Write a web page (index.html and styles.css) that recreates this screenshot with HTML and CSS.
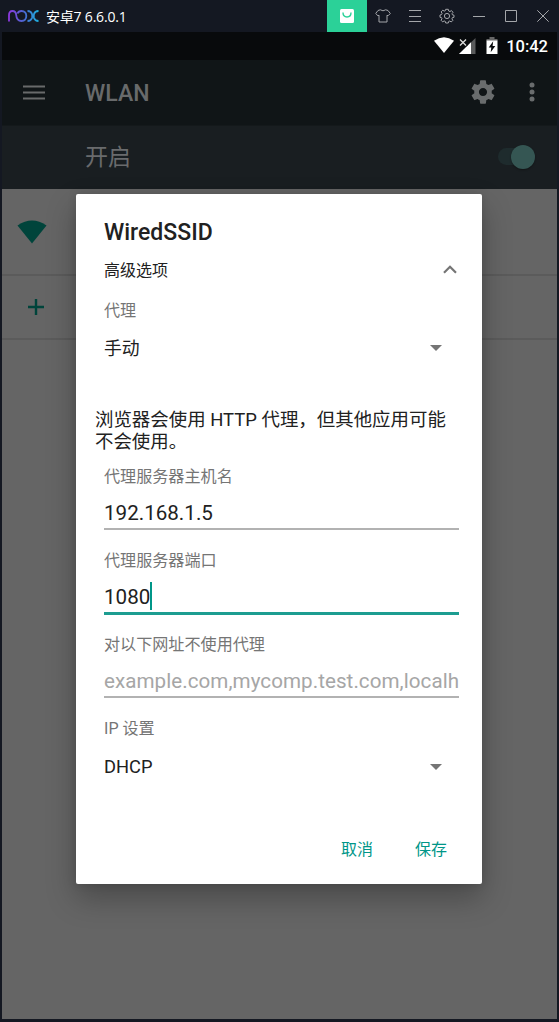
FILE: index.html
```html
<!DOCTYPE html>
<html lang="zh-CN">
<head>
<meta charset="utf-8">
<title>WLAN</title>
<link rel="stylesheet" href="styles.css">
</head>
<body>
<div class="window">
  <header class="titlebar">
    <svg class="logo" width="32" height="14" viewBox="0 0 32 14">
      <defs><linearGradient id="nox" x1="0" y1="0" x2="32" y2="0" gradientUnits="userSpaceOnUse"><stop offset="0" stop-color="#9036e0"/><stop offset=".5" stop-color="#4a68d0"/><stop offset="1" stop-color="#18b8e0"/></linearGradient></defs>
      <g fill="none" stroke="url(#nox)" stroke-width="1.8">
        <path d="M1 12.500V6Q1 2 4.500 2Q7.800 2 8.200 6Q8.600 12 13.500 12Q18.300 11.800 18.300 7Q18.300 2 13.500 2Q10.500 2 9.500 4.500"/>
        <path d="M19.500 2Q23 2 24 5Q24.500 7 24 9Q23 12 19.500 12M30.500 2Q27 2 26 5Q25.500 7 26 9Q27 12 30.500 12"/>
      </g>
    </svg>
    <span class="app-name">安卓7 6.6.0.1</span>
    <div class="tools">
      <div class="tool store"><svg width="14" height="14" viewBox="0 0 14 14"><rect width="14" height="14" rx="1.500" fill="#fff"/><path d="M3 3.500Q3 8 7 8Q11 8 11 3.500" fill="none" stroke="#2bd198" stroke-width="1.400"/></svg></div>
      <div class="tool"><svg width="16" height="14" viewBox="0 0 16 14"><path d="M5.300 .8Q8 2.800 10.700 .8L13 1.500L15.300 4.500L13 6.800L12 6.200V13H4V6.200L3 6.800L.7 4.500L3 1.500Z"/></svg></div>
      <div class="tool"><svg width="12" height="12" viewBox="0 0 12 12"><path d="M0 .5H12M0 6.500H12M0 11.500H12"/></svg></div>
      <div class="tool"><svg width="16" height="16" viewBox="-8 -8 16 16"><path d="M-1.300-6.700H1.300L1.700-5L3-4.400L4.400-5.500L6-3.700L5-2.300L5.400-1.200L7-.8V1.300L5.400 1.600L4.900 2.900L5.900 4.300L4.200 6L2.800 5L1.700 5.400L1.300 7H-1.300L-1.700 5.400L-2.900 4.900L-4.300 5.900L-6 4.200L-5 2.800L-5.400 1.700L-7 1.300V-1L-5.400-1.500L-4.900-2.700L-5.900-4.100L-4.200-5.800L-2.800-4.900L-1.700-5.300Z"/><circle r="2.600"/></svg></div>
      <div class="tool"><svg width="12" height="12" viewBox="0 0 12 12"><path d="M0 6.500H12"/></svg></div>
      <div class="tool"><svg width="12" height="12" viewBox="0 0 12 12"><path d="M.5 .5H11.500V11.500H.5Z"/></svg></div>
      <div class="tool"><svg width="12" height="12" viewBox="0 0 12 12"><path d="M.3 .3L11.700 11.700M11.700 .3L.3 11.700"/></svg></div>
    </div>
  </header>
  <main class="screen">
    <div class="status">
      <svg class="s-wifi" width="20" height="16" viewBox="0 0 20 16"><path d="M0 3.800Q10-3.400 20 3.800L10 16Z" fill="#fff"/></svg>
      <svg class="s-signal" width="17" height="16" viewBox="0 0 17 16"><path d="M0 16L16.500 0V16Z" fill="#5a5b5c"/><path d="M0 16L12 4.300V16Z" fill="#fff"/><path d="M-1-1H8L8.500 7.500L6 9H-1Z" fill="#080a0c"/><path d="M1 1.500L7 7.500M7 1.500L1 7.500" stroke="#ddd" stroke-width="1.300"/></svg>
      <svg class="s-battery" width="12" height="17" viewBox="0 0 12 17"><path d="M3.500 0H8.500V2H11.500V4H.5V2H3.500Z" fill="#666"/><path d="M.5 3.500H11.500V17H.5Z" fill="#fff"/><path d="M7.200 4.300L2.700 10.600H5.300L4.700 15.200L9.300 9H6.600Z" fill="#080a0c"/></svg>
      <span class="clock">10:42</span>
    </div>
    <div class="toolbar">
      <svg class="menu" width="22" height="15" viewBox="0 0 22 15"><path d="M0 1.500H22M0 7.500H22M0 13.500H22" stroke="#686a6b" stroke-width="2"/></svg>
      <h1 class="page-title">WLAN</h1>
      <svg class="gear" width="28" height="28" viewBox="0 0 24 24"><path fill="#696c6d" d="M19.430 12.980c.04-.32.07-.64.07-.98s-.03-.66-.07-.98l2.110-1.650c.19-.15.24-.42.12-.64l-2-3.460c-.12-.22-.39-.3-.61-.22l-2.490 1c-.52-.4-1.080-.73-1.690-.98l-.38-2.650C14.460 2.180 14.250 2 14 2h-4c-.25 0-.46.18-.49.42l-.38 2.650c-.61.25-1.170.59-1.690.98l-2.490-1c-.23-.09-.49 0-.61.22l-2 3.460c-.13.22-.07.49.12.64l2.110 1.650c-.04.32-.07.65-.07.98s.03.66.07.98l-2.110 1.650c-.19.15-.24.42-.12.64l2 3.460c.12.22.39.3.61.22l2.490-1c.52.4 1.080.73 1.690.98l.38 2.650c.03.24.24.42.49.42h4c.25 0 .46-.18.49-.42l.38-2.650c.61-.25 1.170-.59 1.690-.98l2.490 1c.23.09.49 0 .61-.22l2-3.460c.12-.22.07-.49-.12-.64l-2.110-1.650zM12 15.500c-1.930 0-3.500-1.570-3.500-3.500s1.570-3.500 3.500-3.500 3.500 1.570 3.500 3.500-1.570 3.500-3.500 3.500z"/></svg>
      <svg class="more" width="6" height="20" viewBox="0 0 6 20"><g fill="#696c6d"><circle cx="3" cy="3" r="2.500"/><circle cx="3" cy="10" r="2.500"/><circle cx="3" cy="17" r="2.500"/></g></svg>
    </div>
    <div class="switch-bar"><span>开启</span><div class="switch"><i class="thumb"></i></div></div>
    <div class="row network"><svg width="30" height="24" viewBox="0 0 30 24"><path d="M.5 5.500Q15-4.500 29.500 5.500L15 23.500Z" fill="#00443b"/></svg></div>
    <div class="row add"><svg width="18" height="18" viewBox="0 0 18 18"><path d="M1 9H17M9 1V17" stroke="#00443b" stroke-width="2.400"/></svg></div>
  </main>
  <section class="dialog">
    <h2 class="ssid">WiredSSID</h2>
    <div class="advanced"><span>高级选项</span><svg width="14" height="9" viewBox="0 0 14 9"><path d="M1 7.700L7 1.700L13 7.700" fill="none" stroke="#757575" stroke-width="2.200"/></svg></div>
    <div class="label proxy-label">代理</div>
    <div class="select"><span>手动</span><i class="arrow"></i></div>
    <p class="warning">浏览器会使用 HTTP 代理，但其他应用可能不会使用。</p>
    <div class="field"><div class="label">代理服务器主机名</div><div class="input">192.168.1.5</div></div>
    <div class="field"><div class="label">代理服务器端口</div><div class="input focused">1080<i class="caret"></i></div></div>
    <div class="field"><div class="label">对以下网址不使用代理</div><div class="input placeholder">example.com,mycomp.test.com,localh</div></div>
    <div class="label ip-label">IP 设置</div>
    <div class="select ip"><span>DHCP</span><i class="arrow"></i></div>
    <div class="actions"><span>取消</span><span>保存</span></div>
  </section>
</div>
</body>
</html>
```

FILE: styles.css
```css
* { box-sizing: border-box; }
body { margin: 0; font-family: Roboto, "Noto Sans CJK SC", sans-serif; }
svg { display: block; flex: none; }
i { display: block; }
.window { position: relative; width: 559px; height: 1022px; padding: 0 2px 3px; background: #141822; overflow: hidden; }
.titlebar { display: flex; align-items: center; height: 32px; padding-left: 6px; }
.app-name { margin-left: 6px; padding-top: 2px; color: #fff; font: 14px/20px "Open Sans", "Noto Sans CJK SC", sans-serif; letter-spacing: -.2px; white-space: nowrap; }
.tools { display: flex; margin-left: auto; margin-right: -2px; }
.tool { display: flex; align-items: center; justify-content: center; width: 32px; height: 32px; fill: none; stroke: #a4a6aa; stroke-width: 1; }
.store { width: 40px; background: #2bd198; stroke: none; }
.screen { height: 987px; background: #656565; }
.status { display: flex; align-items: center; height: 28px; padding-right: 9px; justify-content: flex-end; background: #080a0c; }
.s-wifi { margin: -2px 1px 0 0; }
.s-signal { margin: -1px 1px 0 4px; }
.s-battery { margin: -2px 0 0 9px; }
.clock { margin-left: 8px; color: #fff; font-size: 16.500px; font-weight: 500; line-height: 31px; }
.toolbar { display: flex; align-items: center; height: 66px; padding: 0 22px 1px 21px; background: #101517; border-bottom: 1px solid #14191b; }
.page-title { margin: 3px 0 0 40px; color: #686a6b; font-size: 23px; font-weight: 500; line-height: 30px; }
.gear { margin-left: auto; }
.more { margin-left: 32px; margin-right: 0; }
.switch-bar { display: flex; align-items: center; justify-content: space-between; height: 63px; padding: 0 22px 0 83px; background: #191e21; color: #696b6d; font-size: 23px; line-height: 60px; }
.switch-bar span { padding-top: 1px; }
.switch { display: flex; align-items: center; justify-content: flex-end; width: 37px; height: 17px; margin-top: -2px; border-radius: 9px; background: #1e2b2d; }
.thumb { width: 24px; height: 24px; border-radius: 50%; background: #355653; box-shadow: 0 1px 2px #0005; flex: none; }
.row { display: flex; align-items: center; border-bottom: 2px solid #5b5b5b; }
.network { height: 87px; padding-left: 15px; }
.add { height: 64px; padding: 0 0 1px 25px; }
.dialog { position: absolute; left: 76px; top: 194px; width: 406px; height: 690px; padding: 19px 23px 0 28px; background: #fff; border-radius: 2px; color: #212121; box-shadow: 0 14px 30px rgba(0,0,0,.28), 0 0 10px rgba(0,0,0,.12); }
.ssid { height: 37px; margin: 0; font-size: 23px; font-weight: 500; line-height: 39px; }
.advanced { display: flex; align-items: center; justify-content: space-between; height: 39px; padding-right: 2px; font-size: 16px; }
.advanced span { margin-top: -2px; }
.label { color: #757575; font-size: 16.100px; line-height: 23px; height: 22px; }
.proxy-label { height: 40px; line-height: 43px; }
.select { display: flex; align-items: center; justify-content: space-between; height: 36px; padding-right: 17px; font-size: 17.800px; }
.arrow { width: 0; height: 0; border: solid transparent; border-width: 6px 6px 0; border-top-color: #757575; }
.select .arrow { margin-top: 2px; }
.warning { width: 358px; margin: 45px 0 0 -9px; font-size: 18.450px; line-height: 21.500px; }
.field { height: 84px; }
.warning + .field { margin-top: 12px; }
.input { display: flex; align-items: flex-end; height: 43px; padding-bottom: 1px; border-bottom: 2px solid #b2b2b2; font-size: 20.600px; line-height: 28px; white-space: nowrap; overflow: hidden; }
.focused { height: 44px; border-bottom: 3px solid #1d9d91; }
.caret { width: 2px; height: 28px; margin-bottom: 1px; background: #009688; }
.placeholder { color: #a6a6a6; letter-spacing: .05px; }
.ip { height: 36px; margin-top: 9px; font-size: 18.300px; }
.actions { display: flex; justify-content: flex-end; gap: 42px; margin-top: 54px; padding-right: 12px; color: #009688; font-size: 16px; line-height: 24px; }
```
